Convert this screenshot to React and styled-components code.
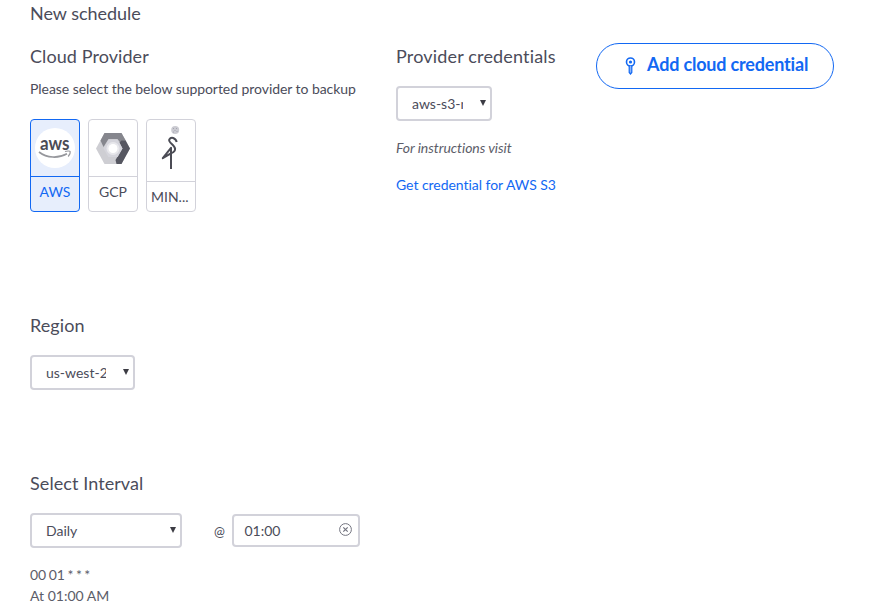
import React from 'react';
import styled, { createGlobalStyle } from 'styled-components';

const GlobalStyle = createGlobalStyle`
  * { box-sizing: border-box; }
  body {
    margin: 0;
    background: #fff;
    color: #4b4c5a;
    font: 14px/20px Lato, sans-serif;
  }
`;

const Page = styled.main`
  height: 615px;
  padding: 2px 35px 0 30px;
  overflow: hidden;
`;

const Heading = styled.h2`
  margin: 0;
  font-size: 18px;
  line-height: 22px;
  font-weight: 400;
  letter-spacing: ${(p) => p.$spacing || '0.08px'};
  white-space: nowrap;
`;

const ProviderSection = styled.section`
  display: grid;
  grid-template-columns: 366px 200px 238px;
  align-items: start;
  height: 248px;
  margin-top: 21px;
`;

const Column = styled.div`
  display: flex;
  flex-direction: column;
  align-items: flex-start;
`;

const Section = styled.section`
  height: ${(p) => p.$height}px;
  margin-top: ${(p) => p.$top}px;
`;

const Description = styled.p`
  margin: 12px 0 0;
  letter-spacing: -0.055px;
  white-space: nowrap;
`;

const CardList = styled.div`
  display: flex;
  gap: 8px;
  margin-top: 20px;
`;

const ProviderCard = styled.button`
  display: flex;
  flex-direction: column;
  width: 50px;
  height: 93px;
  padding: 0;
  border: 1px solid ${(p) => (p.$selected ? '#1268f3' : '#d2d2da')};
  border-radius: 4px;
  background: ${(p) => (p.$selected ? '#e7eefc' : '#fff')};
  color: ${(p) => (p.$selected ? '#1268f3' : '#4b4c5a')};
  font: 14px/20px Lato, sans-serif;
  overflow: hidden;
`;

const CardLogo = styled.span`
  display: flex;
  justify-content: center;
  align-items: center;
  width: 48px;
  height: ${(p) => p.$height}px;
  border-bottom: 1px solid ${(p) => (p.$selected ? '#1268f3' : '#d2d2da')};
  svg { display: block; }
`;

const CardLabel = styled.span`
  width: 48px;
  padding: 5px ${(p) => p.$endPadding || 4}px 0 4px;
  text-align: center;
  white-space: nowrap;
`;

const SelectBox = styled.div`
  display: flex;
  align-items: center;
  justify-content: space-between;
  width: ${(p) => p.$width}px;
  height: 35px;
  margin-top: ${(p) => p.$top || 0}px;
  padding: 1px 4px 0 14px;
  border: 2px solid #d2d2da;
  border-radius: 4px;
  background: #fff;
`;

const SelectValue = styled.span`
  width: ${(p) => p.$width}px;
  overflow: hidden;
  white-space: nowrap;
`;

const Arrow = styled.svg`
  display: block;
  flex: none;
  width: 6px;
  height: 6px;
  margin-top: -2px;
`;

const Hint = styled.em`
  margin-top: 17px;
  color: #5c5d69;
  letter-spacing: -0.05px;
  white-space: nowrap;
`;

const CredentialLink = styled.a`
  margin-top: 17px;
  color: #1268f3;
  letter-spacing: -0.04px;
  text-decoration: none;
  white-space: nowrap;
`;

const AddButton = styled.button`
  display: flex;
  align-items: center;
  width: 238px;
  height: 46px;
  margin-top: -2px;
  padding: 0 0 4px 28px;
  border: 1px solid #1268f3;
  border-radius: 23px;
  background: #fff;
  color: #1268f3;
  font: 700 18px/22px Lato, sans-serif;
  letter-spacing: -0.18px;
  white-space: nowrap;
  svg { flex: none; margin: 3px 11px 0 0; }
`;

const IntervalRow = styled.div`
  display: flex;
  align-items: flex-start;
  margin-top: 19px;
`;

const At = styled.span`
  width: 18px;
  margin: 8px 0 0 32px;
  font-size: 13px;
`;

const TimeField = styled.div`
  display: flex;
  align-items: center;
  justify-content: space-between;
  width: 128px;
  height: 33px;
  margin-top: 1px;
  padding: 0 6px 0 10.5px;
  border: 2px solid #d2d2da;
  border-radius: 4px;
  svg { margin-top: -3px; }
`;

const Summary = styled.div`
  margin-top: 16px;
  color: #5c5d69;
  line-height: 21px;
`;

const CronExpression = styled.div`
  word-spacing: -1.1px;
`;

function SelectField({ value, width, valueWidth, top }) {
  return (
    <SelectBox $width={width} $top={top}>
      <SelectValue $width={valueWidth}>{value}</SelectValue>
      <Arrow viewBox="0 0 6 6"><path d="M0 0h6L3 6z" fill="#3c3c44" /></Arrow>
    </SelectBox>
  );
}

function AwsLogo() {
  return (
    <svg width="42" height="42" viewBox="0 0 42 42">
      <circle cx="21" cy="21" r="20" fill="#fff" />
      <text x="6" y="22.5" fontFamily="Lato, sans-serif" fontSize="18" fontWeight="700" fill="#4b4c55" textLength="29.5" lengthAdjust="spacingAndGlyphs">aws</text>
      <path d="M5 25c8 6.300 19.500 6.500 28 1.800" fill="none" stroke="#96979c" strokeWidth="1.700" />
      <path d="M31 24.500c2.500-.8 5-.6 5.200.2s-.5 3-2 4.800" fill="none" stroke="#96979c" strokeWidth="1.200" />
    </svg>
  );
}

function GcpLogo() {
  return (
    <svg width="34" height="31" viewBox="0 0 34 31">
      <path d="M0 15.500 8.500 0h17L34 15.500 25.500 31h-17z" fill="#ceced3" />
      <path d="M4.500 7.500 8.500 0h17l4.500 8-5.500 2-3-4h-9l-5 8z" fill="#85868d" />
      <path d="M25.500 7.500 29.800 7.800 34 15.500 25.500 31h-5l-1-4 7-11.500-3-6z" fill="#565761" />
      <path d="m7.500 15.500 4.800-8.500h9.400l4.800 8.500-4.800 8.500h-9.400z" fill="#d5d5dc" />
      <circle cx="17" cy="15.500" r="6.500" fill="#e8e8ec" />
      <circle cx="17" cy="15.500" r="4.500" fill="#fff" />
    </svg>
  );
}

function MinioLogo() {
  return (
    <svg width="20" height="50" viewBox="0 0 20 50">
      <circle cx="14.200" cy="3.500" r="4" fill="#cbcbd2" transform="translate(0 .5)" />
      <g fill="#999aa5">
        <circle cx="12.500" cy="2.500" r=".5" />
        <circle cx="15.500" cy="2.500" r=".5" />
        <circle cx="14" cy="4.500" r=".5" />
        <circle cx="16" cy="5.500" r=".5" />
        <circle cx="12.500" cy="6" r=".5" />
      </g>
      <path d="M15.700 16C14.500 11.500 10 10.500 8.300 13.500c-1.500 3 5.500 5.500 5.800 9.300.2 2.200-1.700 3.500-3.800 4.400L1.800 32.200 10 21.800V43" fill="none" stroke="#4b4c55" strokeWidth="2" strokeLinejoin="round" />
    </svg>
  );
}

function KeyIcon() {
  return (
    <svg width="11" height="18" viewBox="0 0 11 18">
      <circle cx="5.500" cy="5" r="4" fill="none" stroke="#1268f3" strokeWidth="1.600" />
      <circle cx="5.500" cy="5" r="1.600" fill="#1268f3" />
      <path d="M4.200 9v6.500l1.300 1.500 1.300-1.500V9" fill="#8bb5fa" stroke="#1268f3" strokeWidth="1.200" />
    </svg>
  );
}

function ClearIcon() {
  return (
    <svg width="13" height="13" viewBox="0 0 13 13" fill="none" stroke="#747580">
      <circle cx="6.500" cy="6.500" r="5.900" />
      <path d="m4.300 4.300 4.400 4.400m0-4.400-4.400 4.400" strokeWidth="1.200" />
    </svg>
  );
}

export default function App() {
  return (
    <Page>
      <GlobalStyle />
      <Heading $spacing="-0.02px">New schedule</Heading>
      <ProviderSection>
        <Column>
          <Heading>Cloud Provider</Heading>
          <Description>Please select the below supported provider to backup</Description>
          <CardList>
            <ProviderCard $selected>
              <CardLogo $selected $height={57}><AwsLogo /></CardLogo>
              <CardLabel>AWS</CardLabel>
            </ProviderCard>
            <ProviderCard>
              <CardLogo $height={57}><GcpLogo /></CardLogo>
              <CardLabel>GCP</CardLabel>
            </ProviderCard>
            <ProviderCard>
              <CardLogo $height={62}><MinioLogo /></CardLogo>
              <CardLabel $endPadding={7}>MIN...</CardLabel>
            </ProviderCard>
          </CardList>
        </Column>
        <Column>
          <Heading $spacing="0.17px">Provider credentials</Heading>
          <SelectField value="aws-s3-minio" width={96} valueWidth={51} top={19} />
          <Hint>For instructions visit</Hint>
          <CredentialLink href="#credentials">Get credential for AWS S3</CredentialLink>
        </Column>
        <AddButton><KeyIcon />Add cloud credential</AddButton>
      </ProviderSection>
      <Section $top={21} $height={137}>
        <Heading>Region</Heading>
        <SelectField value="us-west-2" width={105} valueWidth={60} top={19} />
      </Section>
      <Section $top={21} $height={142}>
        <Heading>Select Interval</Heading>
        <IntervalRow>
          <SelectField value="Daily" width={152} valueWidth={100} />
          <At>@</At>
          <TimeField>01:00<ClearIcon /></TimeField>
        </IntervalRow>
        <Summary>
          <CronExpression>00 01 * * *</CronExpression>
          <div>At 01:00 AM</div>
        </Summary>
      </Section>
    </Page>
  );
}
